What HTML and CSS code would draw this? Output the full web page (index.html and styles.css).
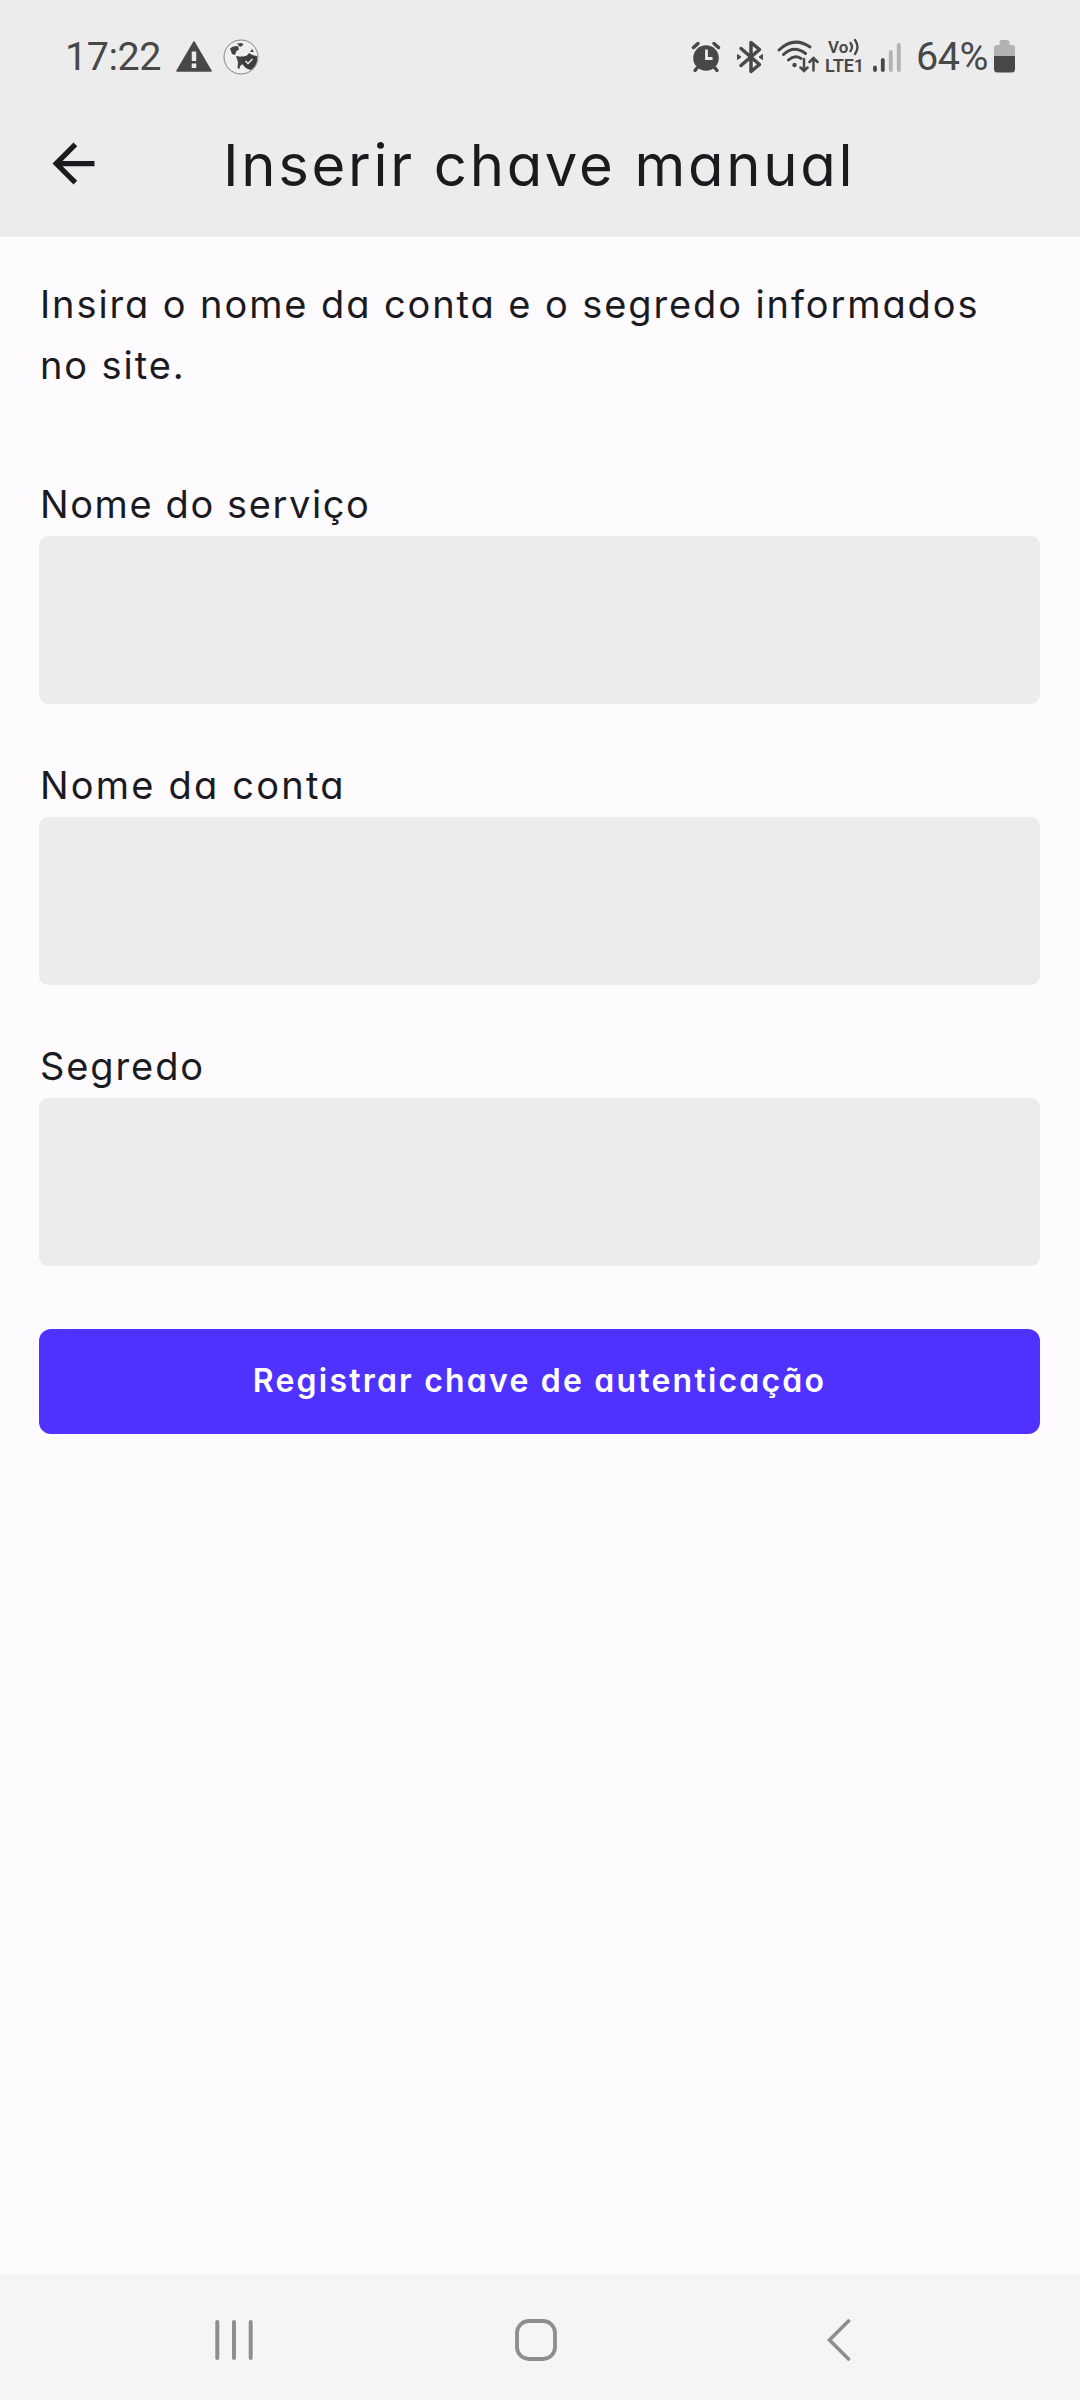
FILE: index.html
```
<!DOCTYPE html>
<html lang="pt-BR">
<head>
    <meta charset="UTF-8">
    <title>Inserir chave manual</title>
    <link rel="stylesheet" href="styles.css">
</head>
<body>
    <div class="status-bar">
        <span class="clock">17:22</span>
        <svg class="icon-warning" width="36" height="32" viewBox="0 0 36 32">
            <path d="M18 1 L35 30 H1 Z" fill="#484848" stroke="#484848" stroke-width="1.5" stroke-linejoin="round"/>
            <path d="M18 10.5 V20 M18 22.5 V27" stroke="#ececec" stroke-width="4.5"/>
        </svg>
        <svg class="icon-globe" width="36" height="36" viewBox="0 0 36 36">
            <circle cx="18" cy="18" r="17" fill="#efefef" stroke="#777" stroke-width="0.9"/>
            <path d="M7 9.500 L10 7.500 L15 7 L16 10.500 L13.500 12 L12 16 L9 15 Z M14 4.500 L19 4 L20.500 6 L17 8 Z M27 13 L29 10 L31 13 Z M13 17 L20 18 L20 25 L17 27 L16.500 30 L14.500 29 L15 23 Z" fill="#444"/>
            <path d="M18 17.500 Q24 18 26 14 Q30 17 34 17 Q35 26 28 31 Q22 30 19.500 25 Z" fill="#3d3d3d"/>
            <path d="M22.500 22 L25 24.500 L29.500 20" fill="none" stroke="#eee" stroke-width="1.500"/>
        </svg>

        <div class="status-right">
            <svg class="icon-alarm" width="30" height="32" viewBox="0 0 30 32">
                <circle cx="15" cy="17" r="12.800" fill="#484848"/>
                <path d="M2.500 6.500 L7 2.500 M27.500 6.500 L23 2.500 M6 27 L4 29.500 M24 27 L26 29.500" stroke="#484848" stroke-width="3.500" stroke-linecap="round"/>
                <path d="M15.500 8.500 V17.500 H21.500" fill="none" stroke="#ececec" stroke-width="2.800"/>
            </svg>
            <svg class="icon-bluetooth" width="28" height="34" viewBox="0 0 28 34">
                <path d="M5 8.500 L23.500 24.500 L15 31.500 V2.500 L23.500 9.500 L5 25.500" fill="none" stroke="#484848" stroke-width="3.500" stroke-linejoin="round" stroke-linecap="round"/>
                <path d="M1.500 14.500 L5 17 L1.500 19.500 Z M26.500 14.500 L23 17 L26.500 19.500 Z" fill="#484848" stroke="#484848" stroke-linejoin="round"/>
            </svg>
            <svg class="icon-wifi" width="42" height="34" viewBox="0 0 42 34">
                <path d="M2 10 Q17 -4 33 7 M6.500 14.500 Q17 4.500 28.500 13.500 M11.500 20 Q17.500 14.500 24 18.500" fill="none" stroke="#484848" stroke-width="3" stroke-linecap="round"/>
                <circle cx="17.500" cy="25" r="2.200" fill="#484848"/>
                <path d="M27 19 V30 M23.500 27.500 L27 31 L30.500 27.500 M36.500 30.500 V18.500 M32.500 22 L36.500 18 L40.500 22" fill="none" stroke="#484848" stroke-width="2.500" stroke-linecap="round"/>
            </svg>
            <div class="lte">
                <div class="volte">Vo<svg width="11" height="18" viewBox="0 0 11 18"><path d="M1.500 5 Q4.500 9 1.500 13 M6 2 Q11 9 6 16" fill="none" stroke="#484848" stroke-width="2.300" stroke-linecap="round"/></svg></div>
                <div class="lte-name">LTE1</div>
            </div>
            <svg class="icon-signal" width="28" height="32" viewBox="0 0 28 32">
                <path d="M2 26.500 V29 M9.800 19 V29" stroke="#484848" stroke-width="3.800" stroke-linecap="round"/>
                <path d="M17.800 11 V29 M25.800 4 V29" stroke="#b2b2b2" stroke-width="3.800" stroke-linecap="round"/>
            </svg>
            <span class="percent">64%</span>
            <svg class="icon-battery" width="21" height="33" viewBox="0 0 21 33">
                <path d="M0 16 V8 Q0 5 3 5 H5.500 V2.500 Q5.500 0 8 0 H13 Q15.500 0 15.500 2.500 V5 H18 Q21 5 21 8 V16 Z" fill="#b2b2b2"/>
                <path d="M0 16 H21 V29 Q21 32.500 17.500 32.500 H3.500 Q0 32.500 0 29 Z" fill="#484848"/>
            </svg>
        </div>
    </div>

    <header class="app-bar">
        <svg class="icon-back" width="63" height="63" viewBox="0 0 24 24">
            <path d="M20 11H7.830l5.590-5.590L12 4l-8 8 8 8 1.410-1.410L7.830 13H20v-2z" fill="#1b1b1f"/>
        </svg>
        <h1>Inserir chave manual</h1>
    </header>

    <main>
        <p class="intro">Insira o nome da conta e o segredo informados no site.</p>

        <div class="input-group">
            <label for="service" class="label-service">Nome do serviço</label>
            <input type="text" id="service">
        </div>
        <div class="input-group">
            <label for="account" class="label-account">Nome da conta</label>
            <input type="text" id="account">
        </div>
        <div class="input-group">
            <label for="secret" class="label-secret">Segredo</label>
            <input type="text" id="secret">
        </div>

        <button class="register-button">Registrar chave de autenticação</button>
    </main>

    <nav class="nav-bar">
        <svg class="nav-recents" width="38" height="44" viewBox="0 0 38 44">
            <path d="M2.300 4 V40 M19 4 V40 M35.700 4 V40" stroke="#8e8e8e" stroke-width="4" stroke-linecap="round"/>
        </svg>
        <svg class="nav-home" width="42" height="44" viewBox="0 0 42 44">
            <rect x="2" y="3" width="38" height="38" rx="12" fill="none" stroke="#8e8e8e" stroke-width="3.800"/>
        </svg>
        <svg class="nav-back" width="24" height="44" viewBox="0 0 24 44">
            <path d="M21.500 3 L2.500 22 L21.500 41" fill="none" stroke="#8e8e8e" stroke-width="3.600" stroke-linecap="round"/>
        </svg>
    </nav>
</body>
</html>
```
FILE: styles.css
```
* { box-sizing: border-box; }
body { margin: 0; height: 2400px; display: flex; flex-direction: column; background: #fefbff; color: #1b1b1f; font-family: Inter, "Open Sans", sans-serif; font-feature-settings: "cv11"; }
svg { display: block; flex: none; }

.status-bar { height: 112px; padding: 1px 65px 0 65px; display: flex; align-items: center; background: #ececec; color: #484848; font-family: Roboto, sans-serif; font-size: 39.5px; letter-spacing: -0.5px; }
.clock, .percent { line-height: 46px; }
.clock { width: 111px; }
.icon-globe { margin-left: 11px; }
.status-right { margin-left: auto; display: flex; align-items: center; }
.icon-bluetooth { margin-left: 15px; }
.icon-wifi { margin-left: 13px; }
.lte { margin-left: 6px; width: 40px; font-weight: 600; letter-spacing: 0; }
.volte { display: flex; align-items: center; padding-left: 3px; font-size: 17px; line-height: 18px; }
.volte svg { margin-left: 1px; }
.lte-name { font-size: 18px; line-height: 20px; }
.icon-signal { margin-left: 8px; }
.percent { margin-left: 15px; width: 74px; }
.icon-battery { margin-left: 4px; }

.app-bar { height: 125px; padding: 0 42px 22px; display: flex; align-items: center; background: #ececec; }
h1 { margin: 2px 0 0 118px; font-size: 58px; font-weight: 400; line-height: 76px; letter-spacing: 2.7px; white-space: nowrap; }

main { flex: 1; padding: 37px 40px 0 39px; }
.intro { margin: 0 0 90px; padding-left: 1px; font-size: 38px; line-height: 61px; letter-spacing: 1.9px; }
.input-group { margin-bottom: 63px; }
label { display: block; height: 50px; padding-left: 1px; font-size: 38px; line-height: 36px; letter-spacing: 1.9px; }
.label-service { letter-spacing: 1.6px; }
.label-account { letter-spacing: 2.2px; }
input { display: block; width: 100%; height: 168px; border: none; border-radius: 9px; background: #ececec; }
.register-button { display: block; width: 100%; height: 105px; padding: 0 0 2px; border: none; border-radius: 12px; background: #4f32ff; color: white; font-family: inherit; font-feature-settings: inherit; font-size: 32px; font-weight: 600; letter-spacing: 2.2px; }

.nav-bar { height: 126px; padding: 6px 229px 0 215px; display: flex; align-items: center; background: #f5f5f5; }
.nav-home { margin-left: 262px; }
.nav-back { margin-left: auto; }
```
